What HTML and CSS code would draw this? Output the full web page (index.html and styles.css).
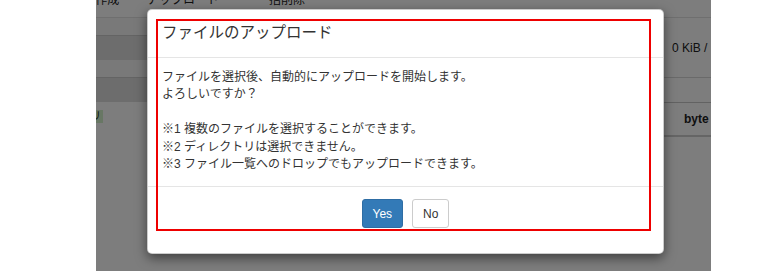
FILE: index.html
```html
<!DOCTYPE html>
<html lang="ja">
<head>
    <meta charset="UTF-8">
    <meta name="viewport" content="width=device-width, initial-scale=1.0">
    <title>ファイルのアップロード</title>
    <link rel="stylesheet" href="styles.css">
</head>
<body>
    <div class="screen">
        <div class="page">
            <nav class="topnav">
                <span class="nav-item first">ディレクトリ作成</span>
                <span class="nav-item">アップロード</span>
                <span class="nav-item">一括削除</span>
            </nav>

            <div class="page-body">
                <aside class="sidebar">
                    <div class="side-item"></div>
                    <div class="side-item dark"></div>
                    <div class="side-item"></div>
                    <div class="side-item dark"></div>
                    <div class="side-badge"><span class="badge">ディレクトリ</span></div>
                </aside>

                <div class="main">
                    <div class="usage">
                        <div class="usage-bar"></div>
                        <span class="usage-text">0 KiB / 10 GiB</span>
                    </div>
                    <div class="toolbar"></div>
                    <div class="table-head">
                        <span>名前</span>
                        <span>更新日時</span>
                        <span class="size-col">byte</span>
                    </div>
                </div>
            </div>

            <div class="backdrop"></div>

            <div class="modal">
                <div class="modal-header">
                    <h4 class="modal-title">ファイルのアップロード</h4>
                </div>
                <div class="modal-body">
                    <p>ファイルを選択後、自動的にアップロードを開始します。<br>よろしいですか？</p>
                    <p>※1 複数のファイルを選択することができます。<br>※2 ディレクトリは選択できません。<br>※3 ファイル一覧へのドロップでもアップロードできます。</p>
                </div>
                <div class="modal-footer">
                    <button class="btn btn-primary">Yes</button>
                    <button class="btn btn-default">No</button>
                </div>
                <!-- annotation frame -->
                <div class="highlight"></div>
            </div>
        </div>
    </div>
</body>
</html>
```

FILE: styles.css
```css
body {
    margin: 0;
    background-color: #fff;
    font-family: "Liberation Sans", "Noto Sans CJK JP", sans-serif;
    color: #333;
}
.screen {
    width: 780px;
    height: 271px;
    overflow: hidden;
}
.page {
    position: relative;
    margin-left: 96px;
    width: 615px;
    height: 271px;
    background-color: #fff;
    overflow: hidden;
}
.topnav {
    display: flex;
    height: 18px;
    border-bottom: 1px solid #e2e2e2;
    box-sizing: border-box;
    font-size: 12px;
    line-height: 12px;
}
.nav-item {
    margin-top: -6px;
    white-space: nowrap;
    color: #222;
}
.nav-item.first {
    margin-left: -72px;
    width: 123px;
}
.nav-item + .nav-item {
    margin-right: 38px;
}
.page-body {
    display: flex;
}
.sidebar {
    width: 99px;
    flex-shrink: 0;
}
.side-item {
    height: 17px;
    background-color: #f6f6f6;
}
.side-item.dark {
    height: 25px;
    background-color: #dedede;
    border-top: 1px solid #ccc;
    box-sizing: border-box;
}
.side-badge {
    padding-top: 8px;
    font-size: 11px;
    white-space: nowrap;
}
.badge {
    display: inline-block;
    margin-left: -62px;
    padding: 0 2px;
    line-height: 13px;
    background-color: #d5f2cc;
    color: #1f3d1f;
}
.main {
    flex: 1;
}
.usage {
    display: flex;
    align-items: center;
    height: 60px;
    border-bottom: 1px solid #d8d8d8;
    box-sizing: border-box;
    font-size: 12px;
}
.usage-bar {
    width: 477px;
    flex-shrink: 0;
}
.usage-text {
    white-space: nowrap;
    color: #222;
}
.toolbar {
    height: 25px;
    border-bottom: 1px solid #c8c8c8;
    box-sizing: border-box;
}
.table-head {
    display: grid;
    grid-template-columns: 300px 189px 60px;
    height: 34px;
    align-items: center;
    border-bottom: 2px solid #cfcfcf;
    box-sizing: border-box;
    font-size: 12px;
    font-weight: bold;
    color: #222;
}
.backdrop {
    position: absolute;
    top: 0;
    left: 0;
    right: 0;
    bottom: 0;
    background-color: rgba(0, 0, 0, 0.51);
}
.modal {
    position: absolute;
    left: 51px;
    top: 9px;
    width: 517px;
    box-sizing: border-box;
    background-color: #fff;
    border: 1px solid rgba(0, 0, 0, 0.2);
    border-radius: 5px;
    box-shadow: 0 4px 12px rgba(0, 0, 0, 0.5);
}
.modal-header {
    padding: 12px 14px 13px;
    border-bottom: 1px solid #e5e5e5;
}
.modal-title {
    margin: 0;
    font-size: 15.5px;
    font-weight: normal;
    line-height: 22px;
    color: #333;
}
.modal-body {
    padding: 11px 14px 13px;
    font-size: 12px;
    line-height: 17.4px;
}
.modal-body p {
    margin: 0;
}
.modal-body p + p {
    margin-top: 17.4px;
}
.modal-footer {
    display: flex;
    justify-content: center;
    gap: 9px;
    padding: 12px 15px 25px;
    border-top: 1px solid #e5e5e5;
}
.btn {
    height: 29px;
    padding: 0 10px;
    font-family: "Liberation Sans", sans-serif;
    font-size: 12px;
    border: 1px solid transparent;
    border-radius: 3px;
    cursor: pointer;
}
.btn-primary {
    background-color: #337ab7;
    border-color: #2e6da4;
    color: #fff;
}
.btn-default {
    background-color: #fff;
    border-color: #ccc;
    color: #333;
}
.highlight {
    position: absolute;
    left: 8px;
    top: 9px;
    width: 495px;
    height: 212px;
    box-sizing: border-box;
    border: 2px solid #ee0000;
    pointer-events: none;
}
```
